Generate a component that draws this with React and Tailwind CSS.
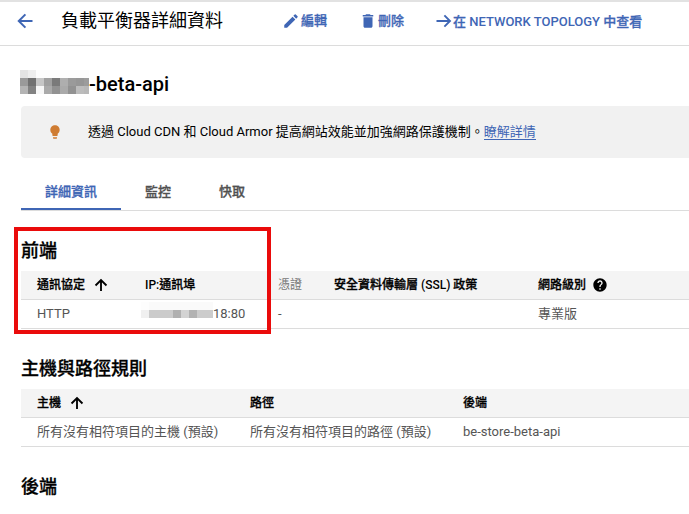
import React from "react";
import { MdEdit, MdDelete, MdHelp, MdLightbulb } from "react-icons/md";

const TITLE_MOSAIC = [
  ["#e4e4e4", "#eeeeee", "#fdfdfd", "#fdfdfd", "#fdfdfd", "#fdfdfd", "#fdfdfd", "#fdfdfd", "#fdfdfd"],
  ["#9a9a9a", "#717171", "#c6c6c6", "#a0a0a0", "#7a7a7a", "#aeaeae", "#9a9a9a", "#969696", "#9c9c9c"],
  ["#b4b4b4", "#828282", "#f7f7f7", "#aaaaaa", "#929292", "#aaaaaa", "#929292", "#bcbcbc", "#b8b8b8"],
];

const IP_MOSAIC = [
  ["#fdfdfd", "#fafafa", "#fafafa", "#fafafa", "#fafafa", "#fafafa", "#fafafa", "#fafafa", "#fafafa"],
  ["#f0f0f0", "#cbcbcb", "#cbcbcb", "#cbcbcb", "#b0b0b0", "#d3d3d3", "#b2b2b2", "#cccccc", "#cccccc"],
];

function Mosaic({ rows, className }) {
  return (
    <div aria-hidden="true" className={`flex flex-col overflow-hidden ${className}`}>
      {rows.map((row, y) => (
        <div key={y} className="flex">
          {row.map((color, x) => (
            <span key={x} className="size-2 shrink-0" style={{ backgroundColor: color }} />
          ))}
        </div>
      ))}
    </div>
  );
}

// Medium weight for Chinese glyphs, which the family only has in regular and bold.
function Medium({ children }) {
  return <span className="[-webkit-text-stroke:0.3px_currentColor]">{children}</span>;
}

function Arrow({ d, strokeWidth, className }) {
  return (
    <svg viewBox="0 0 24 24" fill="none" stroke="currentColor" strokeWidth={strokeWidth} className={`shrink-0 ${className}`}>
      <path d={d} />
    </svg>
  );
}

const ARROW_LEFT = "M21 12H5M12.5 4L4.5 12l8 8";
const ARROW_RIGHT = "M2 12h17M12.5 4.500l7.500 7.500-7.500 7.500";
const ARROW_UP = "M12 21V5M3.800 12.700L12 4.500l8.200 8.200";

function Header() {
  return (
    <header className="flex h-[46px] items-center border-b border-[#dcdcdc] border-t-2 border-t-[#e2e2e2] pl-[15px] pb-1.5 text-[#3f66b5]">
      <Arrow d={ARROW_LEFT} strokeWidth={2.4} className="mr-[26px] size-5" />
      <h1 className="w-[222px] shrink-0 whitespace-nowrap pt-px text-lg leading-6 text-black">負載平衡器詳細資料</h1>
      <button className="flex w-[77px] shrink-0 items-center whitespace-nowrap text-[13px] font-medium">
        <MdEdit className="-ml-px mr-px size-[18px]" />
        <Medium>編輯</Medium>
      </button>
      <button className="flex w-[75px] shrink-0 items-center whitespace-nowrap text-[13px] font-medium">
        <MdDelete className="-ml-px mr-px size-[18px]" />
        <Medium>刪除</Medium>
      </button>
      <button className="flex shrink-0 items-center whitespace-nowrap text-[13px] font-medium">
        <Arrow d={ARROW_RIGHT} strokeWidth={2.5} className="size-[18px]" />
        <span className="pt-0.5">
          <Medium>在</Medium> NETWORK TOPOLOGY <Medium>中查看</Medium>
        </span>
      </button>
    </header>
  );
}

function Banner() {
  return (
    <div className="mt-2.5 flex h-[52px] items-center rounded-l bg-[#f1f1f1] text-[13px] text-black">
      <MdLightbulb className="ml-[26px] mr-[25px] size-4 text-[#cf7c32]" />
      <p className="whitespace-nowrap">
        透過 Cloud CDN 和 Cloud Armor 提高網站效能並加強網路保護機制。
        <a className="border-b border-[#3f66b5] text-[#3f66b5]">瞭解詳情</a>
      </p>
    </div>
  );
}

function Tabs() {
  return (
    <nav className="mt-[15px] flex h-[38px] border-b border-[#dcdcdc] text-[13px] font-medium text-[#505050]">
      <span className="flex h-[37px] w-[100px] items-center justify-center border-b-2 border-[#3f66b5] pt-0.5 text-[#3f66b5]">
        <Medium>詳細資訊</Medium>
      </span>
      <span className="flex h-[37px] w-[74px] items-center justify-center">
        <Medium>監控</Medium>
      </span>
      <span className="flex h-[37px] w-[74px] items-center justify-center">
        <Medium>快取</Medium>
      </span>
    </nav>
  );
}

export default function App() {
  return (
    <div className="relative h-[514px] w-[689px] overflow-hidden bg-white font-['Roboto','Noto_Sans_CJK_TC',sans-serif]">
      <Header />
      <main className="pl-[21px]">
        <div className="-ml-px flex h-[50px] items-end">
          <Mosaic rows={TITLE_MOSAIC} className="mb-0.5 w-[69px]" />
          <h2 className="text-xl leading-6 font-medium text-black">-beta-api</h2>
        </div>
        <Banner />
        <Tabs />

        <h3 className="mt-7 h-[32px] text-lg leading-6 font-medium text-black">
          <Medium>前端</Medium>
        </h3>
        <div className="grid h-[29px] grid-cols-[108px_133px_56px_204px_1fr] items-center border-b border-[#dcdcdc] bg-[#f4f4f4] pl-4 text-xs font-medium whitespace-nowrap text-black">
          <span className="flex items-center">
            <Medium>通訊協定</Medium>
            <Arrow d={ARROW_UP} strokeWidth={2.8} className="ml-2 size-4" />
          </span>
          <span>
            IP:<Medium>通訊埠</Medium>
          </span>
          <span className="font-normal text-[#777]">憑證</span>
          <span>
            <Medium>安全資料傳輸層</Medium> (SSL) <Medium>政策</Medium>
          </span>
          <span className="flex items-center">
            <Medium>網路級別</Medium>
            <MdHelp className="ml-1.5 size-4" />
          </span>
        </div>
        <div className="grid h-[29px] grid-cols-[104px_137px_260px_1fr] items-center border-b border-[#dcdcdc] pl-4 text-[13px] whitespace-nowrap text-[#555]">
          <span>HTTP</span>
          <span className="flex items-center">
            <Mosaic rows={IP_MOSAIC} className="-mt-2 w-[72px]" />
            18:80
          </span>
          <span>-</span>
          <span>專業版</span>
        </div>

        <h3 className="mt-7 h-8 text-lg leading-6 font-medium text-black">
          <Medium>主機與路徑規則</Medium>
        </h3>
        <div className="grid h-[29px] grid-cols-[213px_213px_1fr] items-center border-b border-[#dcdcdc] bg-[#f4f4f4] pl-4 text-xs font-medium whitespace-nowrap text-black">
          <span className="flex items-center">
            <Medium>主機</Medium>
            <Arrow d={ARROW_UP} strokeWidth={2.8} className="ml-2 size-4" />
          </span>
          <span>
            <Medium>路徑</Medium>
          </span>
          <span>
            <Medium>後端</Medium>
          </span>
        </div>
        <div className="grid h-[29px] grid-cols-[213px_213px_1fr] items-center border-b border-[#dcdcdc] pl-4 text-[13px] whitespace-nowrap text-[#555]">
          <span>所有沒有相符項目的主機 (預設)</span>
          <span>所有沒有相符項目的路徑 (預設)</span>
          <span>be-store-beta-api</span>
        </div>

        <h3 className="mt-7 text-lg leading-6 font-medium text-black">
          <Medium>後端</Medium>
        </h3>
      </main>

      {/* Highlight frame around the frontend entry */}
      <div className="absolute top-[227px] left-[14px] h-[107px] w-[257px] border-4 border-[#ea0b0b]" />
    </div>
  );
}
